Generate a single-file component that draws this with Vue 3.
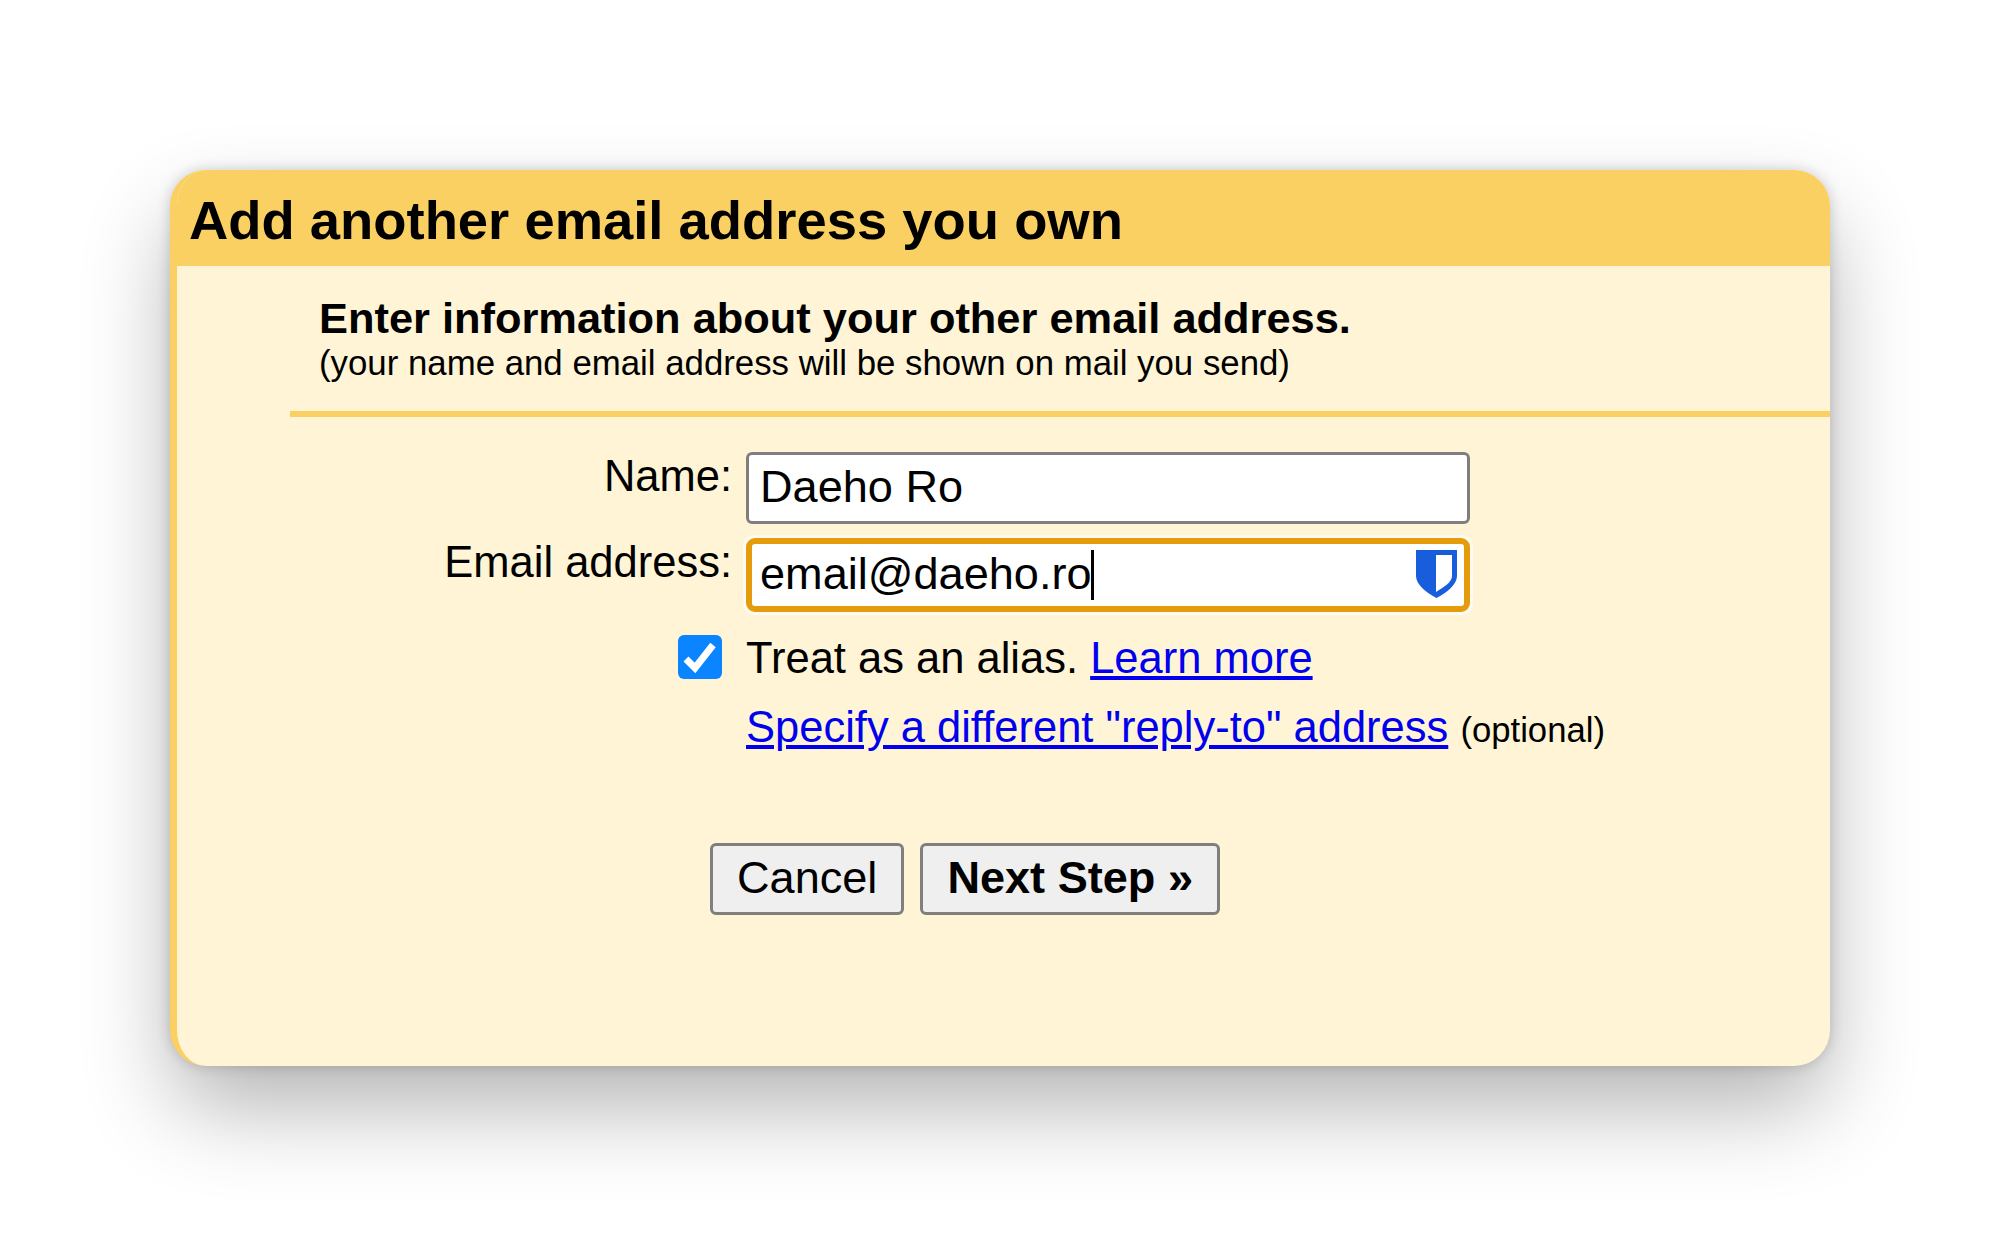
<script setup>
const title = 'Add another email address you own'
</script>

<template>
  <div class="page">
    <div class="card">
      <div class="head">{{ title }}</div>
      <div class="body">
        <div class="intro">
          <div class="intro-title">Enter information about your other email address.</div>
          <div class="intro-sub">(your name and email address will be shown on mail you send)</div>
        </div>
        <div class="rule"></div>
        <div class="form">
          <div class="label">Name:</div>
          <div class="input">Daeho Ro</div>
          <div class="label">Email address:</div>
          <div class="input focused">
            <span>email@daeho.ro</span><span class="caret"></span>
            <svg class="shield" viewBox="0 0 41 48" width="41" height="48">
              <path fill="#175ddc" d="M0 0h41v26c0 9-11 17-20.500 22C11 43 0 35 0 26z"/>
              <path fill="#fff" d="M20 5h16v21c0 6-8 11-16 16z"/>
            </svg>
          </div>
          <div class="check-cell">
            <svg viewBox="0 0 44 44" width="44" height="44">
              <rect width="44" height="44" rx="6" fill="#0a84ff"/>
              <path fill="none" stroke="#fff" stroke-width="7" d="M8 24l9 9L35 10"/>
            </svg>
          </div>
          <div class="line">Treat as an alias. <a>Learn more</a></div>
          <div></div>
          <div class="line second"><a>Specify a different "reply-to" address</a> <span class="opt">(optional)</span></div>
        </div>
        <div class="actions">
          <div class="btn">Cancel</div>
          <div class="btn bold">Next Step »</div>
        </div>
      </div>
    </div>
  </div>
</template>

<style>
html, body { margin: 0; background: #fff; }
</style>

<style scoped>
.page {
  width: 2000px;
  height: 1236px;
  padding: 170px 170px 170px 170px;
  box-sizing: border-box;
  font-family: "Liberation Sans", Arial, sans-serif;
  color: #000;
  background: #fff;
}
.card {
  height: 896px;
  border-radius: 36px;
  overflow: hidden;
  background: #fff5d6;
  box-shadow: 0 44px 90px -4px rgba(0,0,0,.3), 0 0 14px rgba(0,0,0,.18);
  border-left: 7px solid #fbd063;
  display: flex;
  flex-direction: column;
}
.head {
  margin-left: -7px;
  height: 96px;
  background: #fbd063;
  padding-left: 19px;
  font-size: 54.4px;
  font-weight: 700;
  line-height: 102px;
  box-sizing: border-box;
  flex: none;
}
.body { flex: 1; }
.intro { padding: 28px 0 0 142px; height: 117px; box-sizing: border-box; }
.intro-title { font-size: 43.4px; font-weight: 700; line-height: 48px; }
.intro-sub { font-size: 34.8px; line-height: 41px; }
.rule { margin: 28px 0 0 113px; height: 6px; background: #fbd063; }
.form {
  margin: 35px 0 0 113px;
  display: grid;
  grid-template-columns: 442px 724px;
  column-gap: 14px;
  row-gap: 14px;
}
.label { text-align: right; font-size: 43.5px; line-height: 49px; }
.input {
  position: relative;
  height: 72px;
  box-sizing: border-box;
  background: #fff;
  border: 3px solid #7f7f7f;
  border-radius: 6px;
  padding-left: 11px;
  font-size: 45.1px;
  line-height: 64px;
  display: flex;
}
.focused {
  height: 74px;
  border: 6px solid #e49c0c;
  border-radius: 9px;
  padding-left: 8px;
  line-height: 60px;
  box-shadow: 0 0 0 3px #fffaf0;
}
.caret { width: 3px; height: 50px; margin-top: 6px; margin-left: -1px; background: #000; }
.shield { position: absolute; right: 7px; top: 6px; }
.check-cell { display: flex; justify-content: flex-end; padding-top: 9px; }
.check-cell svg { margin-right: 10px; }
.line { font-size: 43.5px; line-height: 64px; white-space: nowrap; }
a { color: #0000ee; text-decoration: underline; }
.second { margin-top: -9px; }
.opt { font-size: 34.7px; }
.actions { margin: 81px 0 0 533px; display: flex; gap: 16px; }
.btn {
  height: 72px;
  box-sizing: border-box;
  padding: 0 24px;
  background: #efefef;
  border: 3px solid #7f7f7f;
  border-radius: 6px;
  font-size: 45.1px;
  line-height: 64px;
}
.bold { font-weight: 700; }
</style>
